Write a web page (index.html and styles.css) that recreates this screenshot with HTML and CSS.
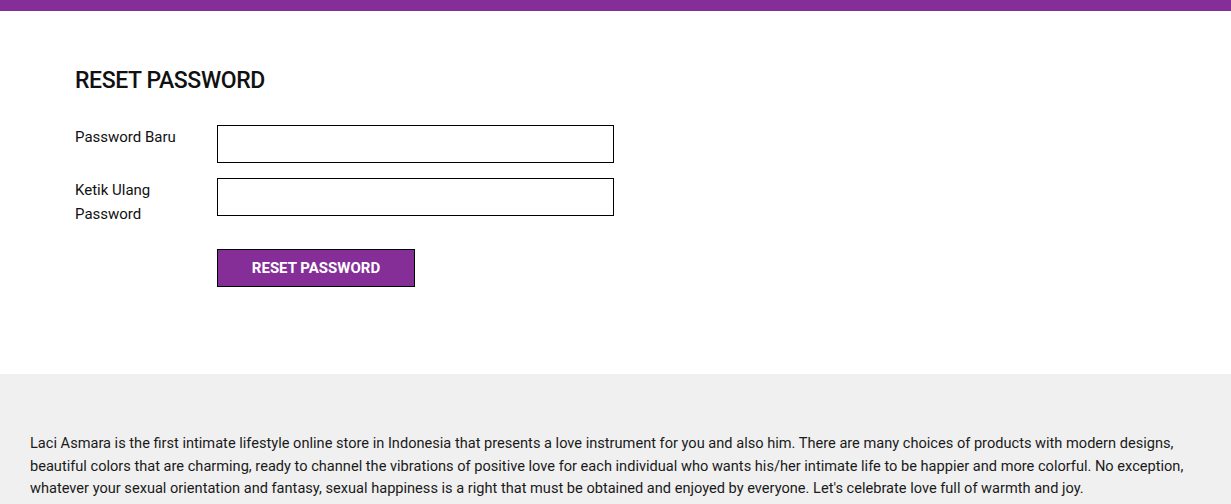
FILE: index.html
```html
<!DOCTYPE html>
<html>
<head>
    <title>Reset Password - Laci Asmara</title>
    <link rel="stylesheet" href="styles.css">
</head>
<body>
    <div class="topbar"></div>

    <div class="content">
        <h1>RESET PASSWORD</h1>

        <form class="reset-form" onsubmit="return false;">
            <div class="form-row">
                <label for="newPassword">Password Baru</label>
                <input type="password" id="newPassword">
            </div>

            <div class="form-row">
                <label for="repeatPassword">Ketik Ulang Password</label>
                <input type="password" id="repeatPassword">
            </div>

            <div class="form-row actions">
                <button type="submit">RESET PASSWORD</button>
            </div>
        </form>
    </div>

    <div class="footer">
        <p>Laci Asmara is the first intimate lifestyle online store in Indonesia that presents a love instrument for you and also him. There are many choices of products with modern designs, beautiful colors that are charming, ready to channel the vibrations of positive love for each individual who wants his/her intimate life to be happier and more colorful. No exception, whatever your sexual orientation and fantasy, sexual happiness is a right that must be obtained and enjoyed by everyone. Let's celebrate love full of warmth and joy.</p>
    </div>
</body>
</html>
```

FILE: styles.css
```css
/* Base */
body {
    margin: 0;
    padding: 0;
    background-color: #ffffff;
    color: #111111;
    font-family: 'Roboto', 'Liberation Sans', sans-serif;
}

.topbar {
    background-color: #852e98;
    height: 11px;
}

/* Reset form */
.content {
    padding: 56px 75px 87px;
}

h1 {
    font-size: 23px;
    font-weight: 500;
    letter-spacing: -0.4px;
    margin: 0 0 31px 0;
}

.form-row {
    display: flex;
    align-items: flex-start;
    margin-bottom: 15px;
}

.form-row label {
    width: 110px;
    margin-right: 32px;
    font-size: 15px;
    line-height: 24px;
}

.form-row input {
    width: 397px;
    height: 38px;
    box-sizing: border-box;
    border: 1px solid #000000;
    padding: 6px 10px;
    margin: 0;
    font-size: 14px;
}

.actions {
    padding-left: 142px;
    margin-top: 23px;
    margin-bottom: 0;
}

button {
    background-color: #852e98;
    color: #ffffff;
    border: 1px solid #000000;
    width: 198px;
    height: 38px;
    font-family: 'Roboto', 'Liberation Sans', sans-serif;
    font-size: 15px;
    font-weight: 700;
    cursor: pointer;
}

/* Footer */
.footer {
    background-color: #f0f0f0;
    padding: 58px 30px 30px 30px;
}

.footer p {
    margin: 0;
    font-size: 14.6px;
    line-height: 22.5px;
    color: #1a1a1a;
}
```
